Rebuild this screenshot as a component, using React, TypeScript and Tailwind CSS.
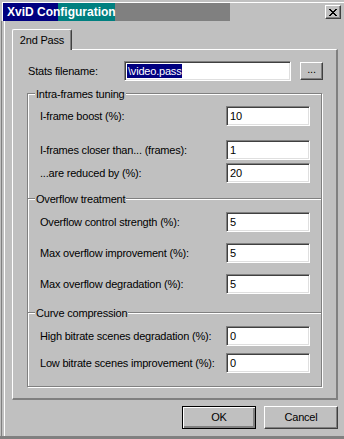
const raised =
  'border border-t-white border-l-white border-r-[#404040] border-b-[#404040] shadow-[inset_-1px_-1px_0_#808080] bg-[#c0c0c0]';
const sunken =
  'border border-t-[#808080] border-l-[#808080] border-r-white border-b-white shadow-[inset_1px_1px_0_#404040,inset_-1px_-1px_0_#dfdfdf] bg-white';

// classic 8x7 close glyph
const closePixels = ['11000011', '01100110', '00111100', '00011000', '00111100', '01100110', '11000011'];

function CloseGlyph() {
  return (
    <svg width="8" height="7" viewBox="0 0 8 7" shapeRendering="crispEdges">
      {closePixels.map((row, y) =>
        row.split('').map((c, x) => (c === '1' ? <rect key={`${x}-${y}`} x={x} y={y} width="1" height="1" fill="#000" /> : null))
      )}
    </svg>
  );
}

function Field({ value, className = '' }: { value: string; className?: string }) {
  return (
    <div className={`${sunken} h-[20px] flex items-center pl-[3px] ${className}`}>
      <span>{value}</span>
    </div>
  );
}

function Row({ label, value, className = '' }: { label: string; value: string; className?: string }) {
  return (
    <div className={`flex items-center h-[20px] pl-[12px] pr-[11px] ${className}`}>
      <span className="flex-1">{label}</span>
      <Field value={value} className="w-[84px]" />
    </div>
  );
}

function Legend({ children }: { children: string }) {
  return <span className="self-start -mt-[7px] ml-[7px] px-[1px] leading-[14px] bg-[#c0c0c0]">{children}</span>;
}

export default function App() {
  return (
    <div className="w-[344px] h-[439px] bg-[#c0c0c0] flex flex-col overflow-hidden font-['Liberation_Sans',Arial,sans-serif] text-[11px] tracking-[-0.2px] text-black leading-none">
      {/* Title bar */}
      <div className="mt-[2px] ml-[2px] border-l border-t border-white">
        <div className="mr-[2px] h-[18px] flex items-center bg-[linear-gradient(to_right,#000080_0,#000080_55px,#008080_55px,#008080_112px,#808080_112px,#808080_227px,transparent_227px)]">
          <span className="pl-[4px] text-white font-bold text-[12px] tracking-normal">XviD Configuration</span>
          <button className={`${raised} ml-auto mr-[1px] w-[16px] h-[14px] flex items-center justify-center`} aria-label="Close">
            <CloseGlyph />
          </button>
        </div>
      </div>

      {/* Body */}
      <div className="flex-1 flex flex-col ml-[1px] border-l border-[#808080]">
        <div className="flex-1 flex flex-col ml-[2px] border-l border-white">
          {/* Tab header */}
          <div className="mt-[8px] ml-[7px] flex">
            <div className="relative z-10 -mb-[1px] w-[60px] h-[21px] bg-[#c0c0c0] border-l border-t border-white border-r border-r-[#404040] shadow-[inset_-1px_0_0_#808080] rounded-t-[2px] flex items-center justify-center">
              2nd Pass
            </div>
          </div>

          {/* Tab panel */}
          <div className="ml-[7px] w-[326px] flex flex-col border-l border-t border-white border-r-2 border-b-2 border-r-[#808080] border-b-[#808080]">
            <div className="mt-[11px] flex items-center h-[20px]">
              <span className="w-[111px] pl-[15px]">Stats filename:</span>
              <div className={`${sunken} w-[167px] h-[20px] flex items-center pl-[2px]`}>
                <span className="bg-[#000080] text-white px-[1px] h-[14px] flex items-center">\video.pass</span>
              </div>
              <button className={`${raised} ml-[9px] w-[23px] h-[18px] flex items-end justify-center pb-[4px]`}>...</button>
            </div>

            {/* Group frame */}
            <div className="mt-[12px] ml-[14px] mb-[11px] w-[295px] flex flex-col border border-[#808080] shadow-[inset_1px_1px_0_#fff,1px_1px_0_#fff]">
              <Legend>Intra-frames tuning</Legend>
              <Row className="mt-[5px]" label="I-frame boost (%):" value="10" />
              <Row className="mt-[14px]" label="I-frames closer than... (frames):" value="1" />
              <Row className="mt-[3px]" label="...are reduced by (%):" value="20" />

              <div className="mt-[15px] flex flex-col border-t border-[#808080] shadow-[inset_0_1px_0_#fff]">
                <Legend>Overflow treatment</Legend>
                <Row className="mt-[6px]" label="Overflow control strength (%):" value="5" />
                <Row className="mt-[11px]" label="Max overflow improvement (%):" value="5" />
                <Row className="mt-[11px]" label="Max overflow degradation (%):" value="5" />
              </div>

              <div className="mt-[18px] pb-[13px] flex flex-col border-t border-[#808080] shadow-[inset_0_1px_0_#fff]">
                <Legend>Curve compression</Legend>
                <Row className="mt-[6px]" label="High bitrate scenes degradation (%):" value="0" />
                <Row className="mt-[7px]" label="Low bitrate scenes improvement (%):" value="0" />
              </div>
            </div>
          </div>

          {/* Dialog buttons */}
          <div className="mt-[6px] pr-[6px] flex justify-end gap-[8px]">
            <button className="w-[74px] h-[23px] bg-[#c0c0c0] border border-black shadow-[inset_1px_1px_0_#fff,inset_-1px_-1px_0_#808080,inset_-2px_-2px_0_#808080]">
              OK
            </button>
            <button className={`${raised} w-[74px] h-[23px]`}>Cancel</button>
          </div>
        </div>
      </div>

      <div className="h-[3px] bg-[#808080]" />
    </div>
  );
}
